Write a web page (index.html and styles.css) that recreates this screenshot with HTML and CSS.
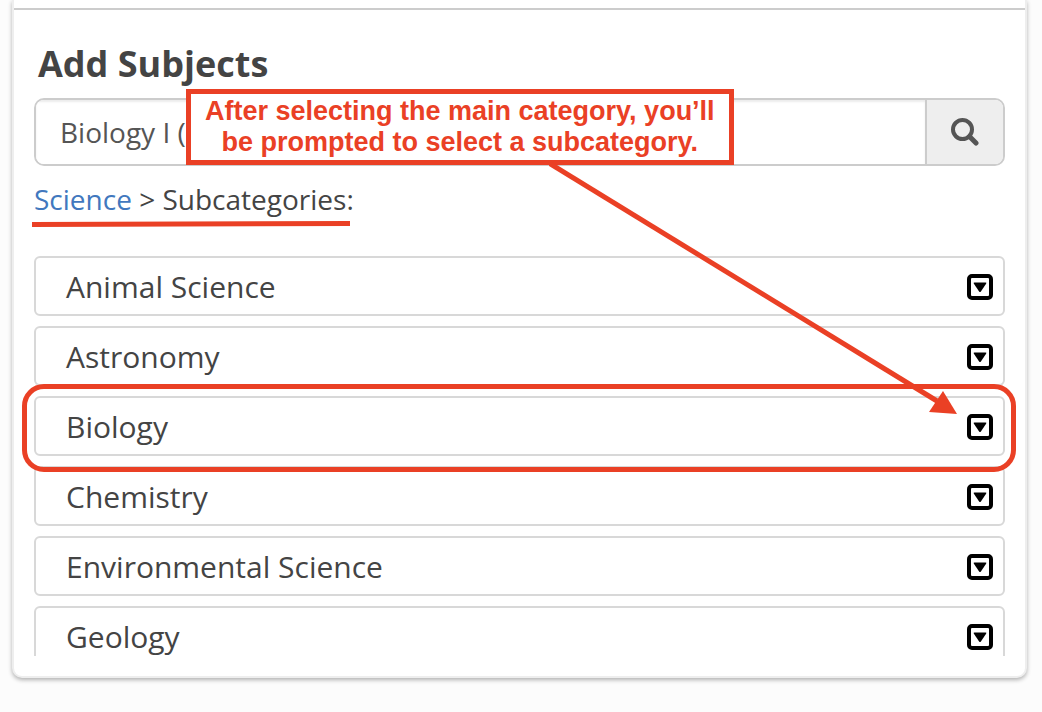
FILE: index.html
```
<!DOCTYPE html>
<html lang="en">
<head>
    <meta charset="UTF-8">
    <meta name="viewport" content="width=device-width, initial-scale=1.0">
    <title>Add Subjects</title>
    <link rel="stylesheet" href="styles.css">
</head>
<body>
    <!-- Shared icons -->
    <svg class="icon-defs" aria-hidden="true">
        <symbol id="icon-caret" viewBox="0 0 26 26">
            <rect x="2" y="2" width="22" height="22" rx="3" fill="none" stroke="#000" stroke-width="4"/>
            <path d="M7.500 8.500h11q1.400 0 .6 1.300l-5.200 7.700q-.9 1.200-1.800 0L6.900 9.800Q6.100 8.500 7.500 8.500z"/>
        </symbol>
    </svg>

    <main class="panel">
        <section class="subjects">
            <h1 class="title">Add Subjects</h1>

            <form class="search">
                <input class="search-input" type="text" value="Biology I (" aria-label="Search subjects">
                <button class="search-btn" type="button" aria-label="Search">
                    <svg width="28" height="28" viewBox="0 0 28 28" fill="none" stroke="#555">
                        <circle cx="11.500" cy="11.500" r="9.500" stroke-width="4"/>
                        <path d="M18.500 18.500l6.500 6.500" stroke-width="5" stroke-linecap="round"/>
                    </svg>
                </button>
            </form>

            <nav class="breadcrumb">
                <a href="#">Science</a> &gt; Subcategories:
                <svg class="underline" viewBox="0 0 318 6" preserveAspectRatio="none" aria-hidden="true">
                    <path d="M0 1L318 0v5L0 6z"/>
                </svg>
            </nav>

            <ul class="subject-list">
                <li><button class="subject" type="button">Animal Science <svg class="caret"><use href="#icon-caret"/></svg></button></li>
                <li><button class="subject" type="button">Astronomy <svg class="caret"><use href="#icon-caret"/></svg></button></li>
                <li class="highlighted"><button class="subject" type="button">Biology <svg class="caret"><use href="#icon-caret"/></svg></button></li>
                <li><button class="subject" type="button">Chemistry <svg class="caret"><use href="#icon-caret"/></svg></button></li>
                <li><button class="subject" type="button">Environmental Science <svg class="caret"><use href="#icon-caret"/></svg></button></li>
                <li><button class="subject" type="button">Geology <svg class="caret"><use href="#icon-caret"/></svg></button></li>
            </ul>
        </section>

        <!-- Callout pointing at the Biology row -->
        <svg class="arrow" viewBox="0 0 410 254" aria-hidden="true">
            <path d="M0 1L388 239" fill="none" stroke="#ea4025" stroke-width="5"/>
            <path d="M408 252L380 250 394 229z" fill="#ea4025"/>
        </svg>
        <p class="callout">After selecting the main category, you’ll<br>be prompted to select a subcategory.</p>
    </main>
</body>
</html>
```

FILE: styles.css
```
* {
    margin: 0;
    padding: 0;
    box-sizing: border-box;
}

body {
    min-height: 100vh;
    font-family: "Open Sans", sans-serif;
    font-size: 28px;
    color: #444;
    background: #fcfcfc;
}

button,
input {
    font: inherit;
    color: inherit;
}

.icon-defs {
    position: absolute;
    width: 0;
    height: 0;
}

.panel {
    position: relative;
    margin: 0 15px 0 12px;
    background: #fff;
    border: 2px solid #eee;
    border-top: 0;
    border-radius: 0 0 10px 10px;
    box-shadow: 0 2px 4px rgba(0, 0, 0, 0.3);
    padding: 8px 0 20px;
}

.subjects {
    border-top: 2px solid #ccc;
    padding: 28px 20px 0;
}

.title {
    font-size: 36px;
    line-height: 52px;
    font-weight: 700;
    padding-left: 4px;
    margin-bottom: 8px;
}

.search {
    display: flex;
    height: 68px;
    border: 2px solid #ccc;
    border-radius: 10px;
    overflow: hidden;
}

.search-input {
    flex: 1;
    min-width: 0;
    padding: 0 24px;
    border: 0;
    color: #555;
    background: #fff;
    box-shadow: inset 0 2px 2px rgba(0, 0, 0, 0.08);
    outline: 0;
}

.search-btn {
    display: flex;
    align-items: center;
    justify-content: center;
    width: 78px;
    border: 0;
    border-left: 2px solid #ccc;
    background: #eee;
    cursor: pointer;
}

.breadcrumb {
    position: relative;
    line-height: 40px;
    margin: 13px 0 37px;
}

.breadcrumb a {
    color: #4178be;
    text-decoration: none;
}

.underline {
    position: absolute;
    left: -2px;
    top: 42px;
    width: 318px;
    height: 6px;
    fill: #ea4025;
}

.subject-list {
    list-style: none;
    display: flex;
    flex-direction: column;
    gap: 10px;
    max-height: 400px;
    margin: 0 -14px;
    padding: 0 14px;
    overflow: hidden;
}

.subject {
    display: flex;
    align-items: center;
    justify-content: space-between;
    width: 100%;
    height: 60px;
    padding: 0 10px 0 30px;
    font-size: 30px;
    text-align: left;
    background: #fff;
    border: 2px solid #d8d8d8;
    border-radius: 6px;
    cursor: pointer;
}

.caret {
    width: 26px;
    height: 26px;
    margin-top: 2px;
}

.highlighted {
    position: relative;
}

.highlighted::after {
    content: "";
    position: absolute;
    z-index: 1;
    inset: -12px -11px -16px -12px;
    border: 5px solid #ea4025;
    border-radius: 22px;
    pointer-events: none;
}

.callout {
    position: absolute;
    left: 172px;
    top: 89px;
    padding: 2px 14px 2px;
    font: bold 27px/31px "Liberation Sans", Arial, sans-serif;
    color: #ea4025;
    text-align: center;
    white-space: nowrap;
    background: #fff;
    border: 5px solid #ea4025;
}

.arrow {
    position: absolute;
    z-index: 2;
    left: 535px;
    top: 162px;
    width: 410px;
    height: 254px;
    pointer-events: none;
}
```
